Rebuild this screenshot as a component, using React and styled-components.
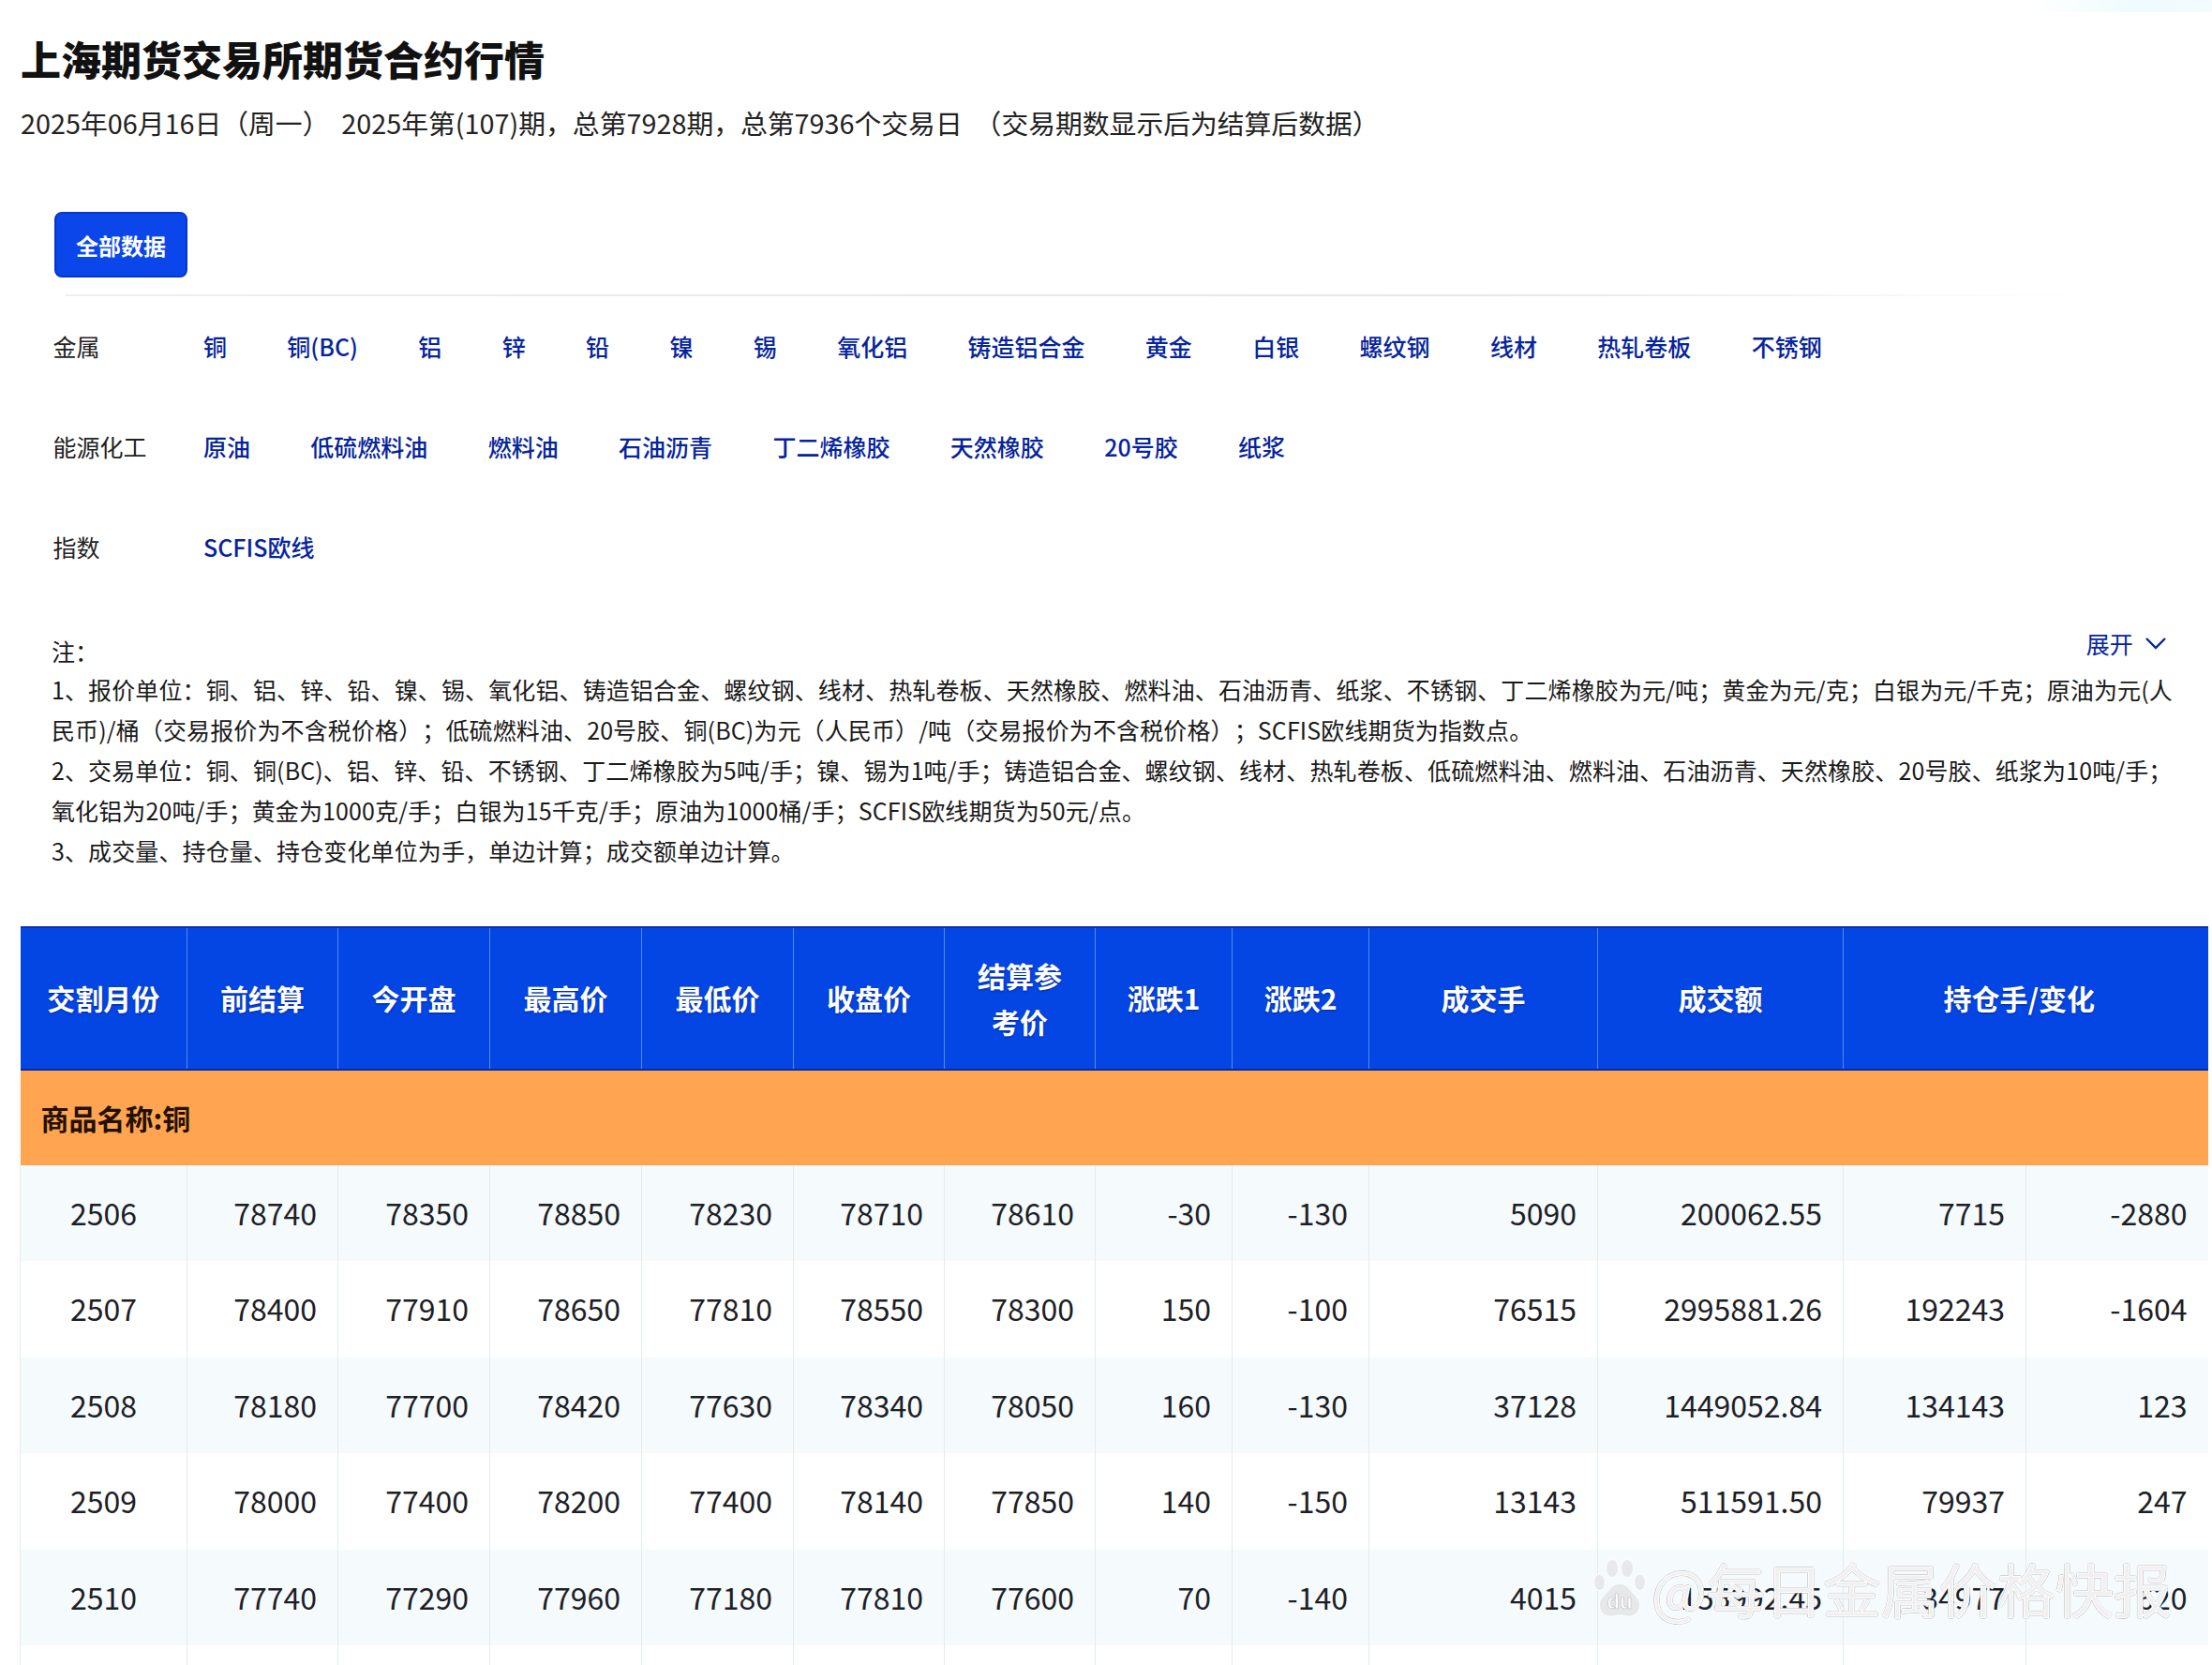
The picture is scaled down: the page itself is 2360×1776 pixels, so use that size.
import React from 'react';
import styled, { createGlobalStyle } from 'styled-components';

const Global = createGlobalStyle`
  html, body { margin: 0; padding: 0; background: #fff; }
  body { width: 2360px; height: 1776px; overflow: hidden; font-family: "Noto Sans CJK SC", "Noto Sans", sans-serif; color: #111; text-spacing-trim: space-all; }
`;

const Page = styled.div`
  position: relative;
  width: 2360px;
  height: 1776px;
  overflow: hidden;
  padding-left: 22px;
  box-sizing: border-box;
`;
const TopGlow = styled.div`
  position: absolute;
  top: 0;
  right: 0;
  width: 190px;
  height: 13px;
  background: linear-gradient(90deg, #fff 0%, #effbfd 55%, #f3fbfc 100%);
`;
const Title = styled.h1`
  margin: 0;
  padding-top: 33px;
  font-size: 43px;
  line-height: 58px;
  font-weight: 900;
  color: #111;
`;
const Subtitle = styled.p`
  margin: 0;
  padding-top: 19px;
  font-size: 28.8px;
  line-height: 42px;
  color: #222;
  white-space: pre;
`;
const Filters = styled.section`
  padding: 0 0 0 36px;
  margin-top: 74px;
`;
const PrimaryButton = styled.button`
  display: block;
  width: 142px;
  height: 70px;
  padding: 0;
  border: 2px solid #0636c9;
  border-radius: 8px;
  background: #0a46ea;
  color: #fff;
  font: 700 24px "Noto Sans CJK SC", sans-serif;
`;
const Divider = styled.div`
  height: 2px;
  margin: 18px 140px 0 12px;
  background: linear-gradient(90deg, #eee 0%, #e6e6e6 70%, #fff 100%);
`;
const CategoryList = styled.div`
  display: flex;
  flex-direction: column;
  gap: 71px;
  margin-top: 34.5px;
`;
const CategoryRow = styled.div`
  display: flex;
  align-items: center;
  height: 36px;
  font-size: 25px;
  line-height: 36px;
  margin-left: -1.5px;
`;
const CategoryLabel = styled.span`
  width: 160.5px;
  flex: none;
  color: #222;
`;
const CategoryLinks = styled.div`
  display: flex;
  gap: 64.35px;
`;
const CategoryLink = styled.a`
  color: #06249c;
  font-weight: 500;
  white-space: nowrap;
`;
const Notes = styled.section`
  margin: 0 6px 0 33px;
  padding-top: 72px;
  font-size: 25px;
  line-height: 43px;
  letter-spacing: .12px;
  color: #1a1a1a;
`;
const NoteHead = styled.div`
  display: flex;
  justify-content: space-between;
  align-items: flex-start;
  height: 41.5px;
`;
const Expand = styled.span`
  display: flex;
  align-items: center;
  gap: 12px;
  margin-top: -8px;
  margin-right: 42px;
  font-size: 25px;
  color: #06249c;
`;
const NoteLine = styled.div`
  white-space: nowrap;
`;
const Table = styled.table`
  table-layout: fixed;
  border-collapse: collapse;
  width: 2333px;
  margin: 58.5px 0 0 -1px;
`;
const HeadRow = styled.tr`
  height: 152px;
  background: #0446e4;
  border-top: 2px solid #0f2ea8;
  border-bottom: 2px solid #082a9a;
`;
const HeadCell = styled.th`
  padding: 0 ${p => (p.$wide ? '38px' : '24px')} 0 24px;
  font-size: 30px;
  line-height: 49px;
  font-weight: 700;
  color: #fff;
  text-align: center;
  border-left: 1.5px solid #4f8bec;
  text-shadow: 0 1px 2px rgba(0, 20, 90, .6);
  &:first-child { border-left: 0; }
`;
const GroupRow = styled.tr`
  height: 102px;
  background: #ffa552;
`;
const GroupCell = styled.td`
  padding: 0 0 0 22px;
  font-size: 30px;
  font-weight: 700;
  color: #241000;
`;
const DataRow = styled.tr`
  height: 102.5px;
  background: ${p => (p.$striped ? '#f5fafd' : '#fff')};
`;
const DataCell = styled.td`
  padding: 0 22px 2px 0;
  font-size: 32px;
  color: #1c2026;
  text-align: right;
  border-left: 1.5px solid #e2ecf1;
  &:first-child {
    text-align: center;
    padding-right: 0;
  }
`;
const Watermark = styled.div`
  position: absolute;
  left: 1700px;
  top: 1656px;
  display: flex;
  align-items: center;
  gap: 6px;
`;
const WatermarkText = styled.span`
  font-size: 62px;
  line-height: 76px;
  font-weight: 400;
  color: rgba(255, 255, 255, .8);
  -webkit-text-stroke: 1px #fff;
  text-shadow: 1px 0 0 #b4b4b4, -1px 0 0 #b4b4b4, 0 1px 0 #b4b4b4, 0 -1px 0 #b4b4b4;
  white-space: nowrap;
`;

const widths = [178, 161, 162, 162, 162, 161, 161, 146, 146, 244, 262, 195, 194];
const heads = ['交割月份', '前结算', '今开盘', '最高价', '最低价', '收盘价', '结算参考价', '涨跌1', '涨跌2', '成交手', '成交额'];
const rows = [
  ['2506', '78740', '78350', '78850', '78230', '78710', '78610', '-30', '-130', '5090', '200062.55', '7715', '-2880'],
  ['2507', '78400', '77910', '78650', '77810', '78550', '78300', '150', '-100', '76515', '2995881.26', '192243', '-1604'],
  ['2508', '78180', '77700', '78420', '77630', '78340', '78050', '160', '-130', '37128', '1449052.84', '134143', '123'],
  ['2509', '78000', '77400', '78200', '77400', '78140', '77850', '140', '-150', '13143', '511591.50', '79937', '247'],
  ['2510', '77740', '77290', '77960', '77180', '77810', '77600', '70', '-140', '4015', '155992.45', '34977', '620'],
];
const metals = ['铜', '铜(BC)', '铝', '锌', '铅', '镍', '锡', '氧化铝', '铸造铝合金', '黄金', '白银', '螺纹钢', '线材', '热轧卷板', '不锈钢'];
const energy = ['原油', '低硫燃料油', '燃料油', '石油沥青', '丁二烯橡胶', '天然橡胶', '20号胶', '纸浆'];
const notes = [
  '1、报价单位：铜、铝、锌、铅、镍、锡、氧化铝、铸造铝合金、螺纹钢、线材、热轧卷板、天然橡胶、燃料油、石油沥青、纸浆、不锈钢、丁二烯橡胶为元/吨；黄金为元/克；白银为元/千克；原油为元(人',
  '民币)/桶（交易报价为不含税价格）；低硫燃料油、20号胶、铜(BC)为元（人民币）/吨（交易报价为不含税价格）；SCFIS欧线期货为指数点。',
  '2、交易单位：铜、铜(BC)、铝、锌、铅、不锈钢、丁二烯橡胶为5吨/手；镍、锡为1吨/手；铸造铝合金、螺纹钢、线材、热轧卷板、低硫燃料油、燃料油、石油沥青、天然橡胶、20号胶、纸浆为10吨/手；',
  '氧化铝为20吨/手；黄金为1000克/手；白银为15千克/手；原油为1000桶/手；SCFIS欧线期货为50元/点。',
  '3、成交量、持仓量、持仓变化单位为手，单边计算；成交额单边计算。',
];

function Category({ label, items }) {
  return (
    <CategoryRow>
      <CategoryLabel>{label}</CategoryLabel>
      <CategoryLinks>
        {items.map(i => <CategoryLink key={i}>{i}</CategoryLink>)}
      </CategoryLinks>
    </CategoryRow>
  );
}

function Paw() {
  return (
    <svg width="56" height="64" viewBox="0 0 56 64" aria-hidden="true">
      <g fill="#e6e8ea" stroke="#fff" strokeWidth="1">
        <ellipse cx="6.5" cy="26" rx="6" ry="8.5" />
        <ellipse cx="20" cy="11" rx="6.5" ry="9.5" />
        <ellipse cx="36" cy="11" rx="6.5" ry="9.5" />
        <ellipse cx="49.5" cy="26" rx="6" ry="8.5" />
        <path d="M28 27c7 0 10 6 15 11 5 5 8 9 6 16-2 7-9 9-14 8-3-.5-5-1-7-1s-4 .5-7 1c-5 1-12-1-14-8-2-7 1-11 6-16 5-5 8-11 15-11z" />
      </g>
      <text x="28" y="54" textAnchor="middle" fontFamily="Liberation Sans, sans-serif" fontWeight="700" fontSize="22" fill="#fff" stroke="#bbb" strokeWidth=".6">du</text>
    </svg>
  );
}

export default function App() {
  return (
    <Page>
      <Global />
      <TopGlow />
      <Title>上海期货交易所期货合约行情</Title>
      <Subtitle>{'2025年06月16日（周一）  2025年第(107)期，总第7928期，总第7936个交易日  （交易期数显示后为结算后数据）'}</Subtitle>
      <Filters>
        <PrimaryButton type="button">全部数据</PrimaryButton>
        <Divider />
        <CategoryList>
          <Category label="金属" items={metals} />
          <Category label="能源化工" items={energy} />
          <Category label="指数" items={['SCFIS欧线']} />
        </CategoryList>
      </Filters>
      <Notes>
        <NoteHead>
          <span>注：</span>
          <Expand>
            展开
            <svg width="24" height="14" viewBox="0 0 24 14" fill="none" stroke="#06249c" strokeWidth="2.4" aria-hidden="true">
              <path d="M2 2l10 10L22 2" />
            </svg>
          </Expand>
        </NoteHead>
        {notes.map(n => <NoteLine key={n}>{n}</NoteLine>)}
      </Notes>
      <Table>
        <colgroup>
          {widths.map((w, i) => <col key={i} style={{ width: w }} />)}
        </colgroup>
        <thead>
          <HeadRow>
            {heads.map(h => <HeadCell key={h}>{h}</HeadCell>)}
            <HeadCell colSpan={2} $wide>持仓手/变化</HeadCell>
          </HeadRow>
        </thead>
        <tbody>
          <GroupRow>
            <GroupCell colSpan={13}>商品名称:铜</GroupCell>
          </GroupRow>
          {rows.map((r, i) => (
            <DataRow key={r[0]} $striped={i % 2 === 0}>
              {r.map((c, j) => <DataCell key={j}>{c}</DataCell>)}
            </DataRow>
          ))}
          <DataRow>
            {widths.map((w, j) => <DataCell key={j} />)}
          </DataRow>
        </tbody>
      </Table>
      <Watermark>
        <Paw />
        <WatermarkText>@每日金属价格快报</WatermarkText>
      </Watermark>
    </Page>
  );
}
